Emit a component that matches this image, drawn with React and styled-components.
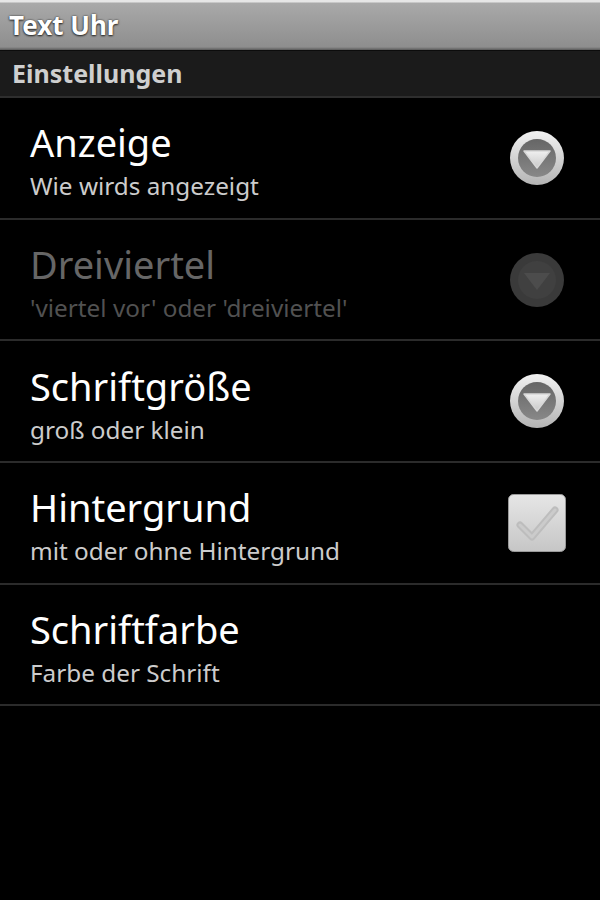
import React from "react";
import styled, { createGlobalStyle } from "styled-components";

const Global = createGlobalStyle`
  html, body { margin: 0; padding: 0; background: #000; }
  body { font-family: "Noto Sans", "Open Sans", "DejaVu Sans", sans-serif; }
  #root { min-height: 900px; background: #000; }
`;

const Screen = styled.div`
  width: 600px;
  height: 900px;
  background: #000;
  display: flex;
  flex-direction: column;
  overflow: hidden;
`;

const TitleBar = styled.div`
  height: 50px;
  box-sizing: border-box;
  padding-left: 9px;
  display: flex;
  align-items: center;
  background: linear-gradient(#e6e6e6 0px, #e6e6e6 2px, #a9a9a9 3px, #8e8e8e 47px, #5a5a5a 50px);
  color: #fff;
  font-weight: 700;
  font-size: 26px;
  text-shadow: 0 0 2px #333, 0 1px 2px #222;
`;

const CategoryHeader = styled.div`
  height: 48px;
  box-sizing: border-box;
  padding: 0 0 2px 12px;
  display: flex;
  align-items: center;
  background: #1b1b1b;
  border-top: 1px solid #0c0c0c;
  border-bottom: 2px solid #2e2e2e;
  color: #cfcfcf;
  font-weight: 700;
  font-size: 25px;
`;

const List = styled.div`
  display: flex;
  flex-direction: column;
`;

const Row = styled.div`
  height: 121.7px;
  box-sizing: border-box;
  border-bottom: 2px solid #2b2b2b;
  display: flex;
  align-items: center;
  padding: 0 34px 0 30px;
`;

const TextCol = styled.div`
  flex: 1;
  display: flex;
  flex-direction: column;
  padding-top: 5px;
`;

const Title = styled.div`
  font-size: 38px;
  line-height: 46px;
  color: ${(p) => (p.$disabled ? "#666" : "#fff")};
`;

const Summary = styled.div`
  margin-top: 6px;
  font-size: 24.3px;
  line-height: 30px;
  color: ${(p) => (p.$disabled ? "#515151" : "#cccccc")};
`;

const Widget = styled.div`
  width: 58px;
  height: 58px;
  display: flex;
  align-items: center;
  justify-content: center;
  flex-shrink: 0;
`;

function DropIcon({ disabled }) {
  if (disabled) {
    return (
      <svg width="54" height="54" viewBox="0 0 54 54">
        <circle cx="27" cy="27" r="27" fill="#3a3a3a" />
        <circle cx="27" cy="27" r="19" fill="#404040" />
        <polygon points="14,20 40,20 27,37" fill="#4c4c4c" />
      </svg>
    );
  }
  return (
    <svg width="54" height="54" viewBox="0 0 54 54">
      <defs>
        <linearGradient id="ring" x1="0" y1="0" x2="0" y2="1">
          <stop offset="0" stopColor="#f2f2f2" />
          <stop offset="1" stopColor="#b4b4b4" />
        </linearGradient>
        <linearGradient id="inner" x1="0" y1="0" x2="0" y2="1">
          <stop offset="0" stopColor="#666" />
          <stop offset="1" stopColor="#888" />
        </linearGradient>
        <linearGradient id="tri" x1="0" y1="0" x2="0" y2="1">
          <stop offset="0" stopColor="#f0f0f0" />
          <stop offset="1" stopColor="#c8c8c8" />
        </linearGradient>
      </defs>
      <circle cx="27" cy="27" r="27" fill="url(#ring)" />
      <circle cx="27" cy="27" r="19" fill="url(#inner)" />
      <polygon points="14,20 40,20 27,37" fill="url(#tri)" strokeLinejoin="round" stroke="#d8d8d8" strokeWidth="1.5" />
    </svg>
  );
}

function CheckIcon() {
  return (
    <svg width="58" height="58" viewBox="0 0 58 58">
      <defs>
        <linearGradient id="box" x1="0" y1="0" x2="0" y2="1">
          <stop offset="0" stopColor="#e6e6e6" />
          <stop offset="1" stopColor="#c6c6c6" />
        </linearGradient>
      </defs>
      <rect x="0.5" y="0.5" width="57" height="57" rx="5" fill="url(#box)" stroke="#9a9a9a" strokeWidth="1" />
      <path d="M12 31 L24 43 L47 16" fill="none" stroke="#bdbdbd" strokeWidth="7" strokeLinecap="round" strokeLinejoin="round" />
      <path d="M12 31 L24 43 L47 16" fill="none" stroke="#cbcbcb" strokeWidth="3" strokeLinecap="round" strokeLinejoin="round" />
    </svg>
  );
}

const prefs = [
  { title: "Anzeige", summary: "Wie wirds angezeigt", widget: "drop" },
  { title: "Dreiviertel", summary: "'viertel vor' oder 'dreiviertel'", widget: "drop", disabled: true },
  { title: "Schriftgröße", summary: "groß oder klein", widget: "drop" },
  { title: "Hintergrund", summary: "mit oder ohne Hintergrund", widget: "check" },
  { title: "Schriftfarbe", summary: "Farbe der Schrift" },
];

export default function App() {
  return (
    <Screen>
      <Global />
      <TitleBar>Text Uhr</TitleBar>
      <CategoryHeader>Einstellungen</CategoryHeader>
      <List>
        {prefs.map((p) => (
          <Row key={p.title}>
            <TextCol>
              <Title $disabled={p.disabled}>{p.title}</Title>
              <Summary $disabled={p.disabled}>{p.summary}</Summary>
            </TextCol>
            {p.widget && (
              <Widget>
                {p.widget === "drop" ? <DropIcon disabled={p.disabled} /> : <CheckIcon />}
              </Widget>
            )}
          </Row>
        ))}
      </List>
    </Screen>
  );
}
